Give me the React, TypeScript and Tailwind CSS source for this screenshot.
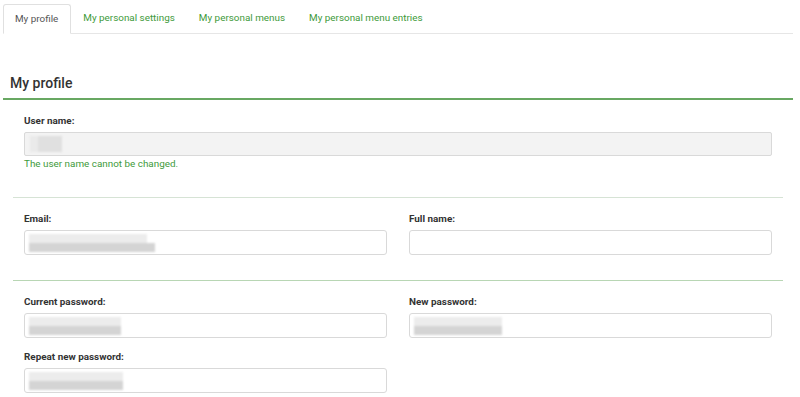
import React from 'react';

const tabs = ['My profile', 'My personal settings', 'My personal menus', 'My personal menu entries'];

// blurred placeholder that stands in for hidden field values
const Smudge: React.FC<{ top: number; bottom: number }> = ({ top, bottom }) => (
  <div className="flex flex-col blur-[1px]">
    <div className="h-[9px] bg-[#ececec]" style={{ width: top }}></div>
    <div className="h-[9px] bg-[#d4d4d4]" style={{ width: bottom }}></div>
  </div>
);

const Field: React.FC<{ label: string; children?: React.ReactNode; className?: string }> = ({ label, children, className }) => (
  <div className={className}>
    <div className="h-[14px] text-[9.9px] leading-[14px] font-bold text-[#333]">{label}</div>
    <div className="mt-[4px] h-[25px] border border-[#d9d9d9] rounded-[3px] bg-white flex items-center px-[4px]">{children}</div>
  </div>
);

const App: React.FC = () => {
  return (
    <div className="w-full h-[397px] overflow-hidden bg-white" style={{ fontFamily: 'Roboto, "Liberation Sans", sans-serif' }}>
      {/* tabs */}
      <div className="mt-[4px] ml-[3px] mr-[7px] flex border-b border-[#e6e6e6]">
        {tabs.map((t, i) =>
          i === 0 ? (
            <div key={t} className="-mb-px h-[30px] pl-[11px] pr-[12px] flex items-center border border-[#e0e0e0] border-b-white rounded-t-[3px] bg-white text-[9.9px] text-[#555]">
              {t}
            </div>
          ) : (
            <div key={t} className="h-[29px] px-[12px] flex items-center text-[9.9px] text-[#3e9a3a]">
              {t}
            </div>
          )
        )}
      </div>

      {/* heading */}
      <div className="mt-[39px] ml-[3px] mr-[7px] pl-[7px] pb-[5px] border-b-2 border-[#68a862]">
        <div className="h-[20px] text-[14px] leading-[20px] font-medium text-[#333]">My profile</div>
      </div>

      {/* user name */}
      <div className="ml-[24px] mr-[28px] pt-[14px]">
        <div className="h-[14px] text-[9.9px] leading-[14px] font-bold text-[#333]">User name:</div>
        <div className="mt-[4px] h-[24px] border border-[#d9d9d9] rounded-[2px] bg-[#f3f3f3] flex items-center px-[5px]">
          <div className="flex blur-[1px]">
            <div className="w-[8px] h-[16px] bg-[#eaeaea]"></div>
            <div className="w-[24px] h-[16px] bg-[#e0e0e0]"></div>
          </div>
        </div>
        <div className="mt-[1px] text-[9.9px] leading-[13px] text-[#3e9a3a]">The user name cannot be changed.</div>
      </div>

      {/* email / full name */}
      <div className="mt-[27px] ml-[13px] mr-[17px] px-[11px] pt-[14px] border-t border-[#d6e3d5] grid grid-cols-2 gap-x-[22px]">
        <Field label="Email:">
          <Smudge top={118} bottom={126} />
        </Field>
        <Field label="Full name:" />
      </div>

      {/* passwords */}
      <div className="mt-[25px] ml-[13px] mr-[17px] px-[11px] pt-[14px] border-t border-[#b8d6b4] grid grid-cols-2 gap-x-[22px] gap-y-[12px]">
        <Field label="Current password:">
          <Smudge top={92} bottom={92} />
        </Field>
        <Field label="New password:">
          <Smudge top={88} bottom={88} />
        </Field>
        <Field label="Repeat new password:">
          <Smudge top={94} bottom={94} />
        </Field>
      </div>
    </div>
  );
};

export default App;
